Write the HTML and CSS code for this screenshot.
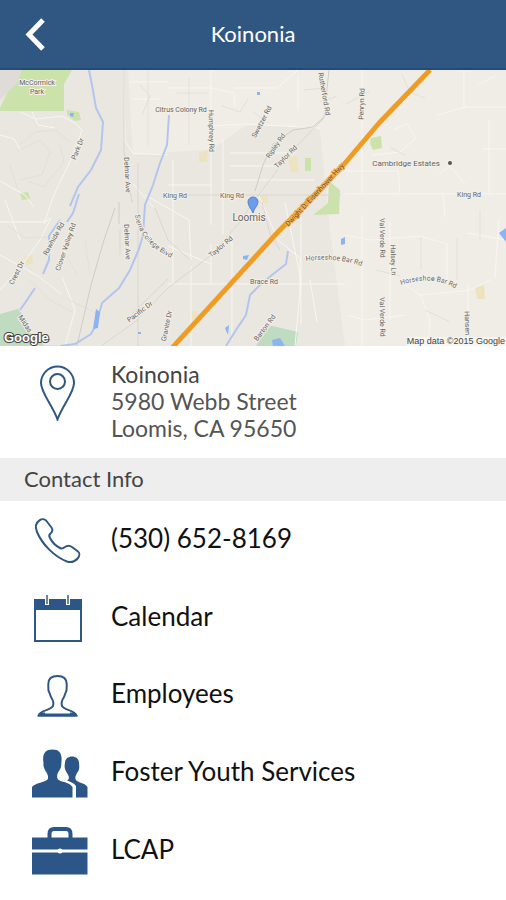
FILE: index.html
```html
<!DOCTYPE html>
<html lang="en">
<head>
<meta charset="utf-8">
<meta name="viewport" content="width=device-width, initial-scale=1">
<title>Koinonia</title>
<link rel="stylesheet" href="styles.css">
</head>
<body>
<header class="topbar">
  <button class="back" type="button" aria-label="Back">
    <svg class="back-icon" viewBox="0 0 24 36" aria-hidden="true"><path d="M19 4 5 18.500 19 33"/></svg>
  </button>
  <h1 class="title">Koinonia</h1>
</header>
<main class="content">
  <svg class="map" viewBox="0 70 506 276" role="img" aria-label="Map of Loomis">
    <rect class="land" y="70" width="506" height="276"/>
    <path class="land-light" d="M128 70H506V346H345L330 230 320 130 245 126 211 150 168 153 133 155Z"/>
    <path class="town" d="M168 152 211 150 250 125 318 127 320 180 270 242 211 240 168 220Z"/>
    <path class="park" d="M18 70H72L64 84V111H0V108Z"/>
    <path class="blank" d="M0 70H22L17 83 0 100Z"/>
    <path class="park" d="M67 110 79 112 81 120 75 121 67 115ZM20 193 28 192 30 199 22 200ZM305 158H311V171H305ZM371 138 381 136 382 148 373 150 370 144ZM329 181 340 190 339 214 313 215 328 203Z"/>
    <path class="wood" d="M0 314 18 309 27 320 31 335 45 346H0ZM268 325 298 332 296 346H256Z"/>
    <path class="yellow" d="M24 257 32 255 33 264 26 265ZM199 153 208 150 207 162 199 162ZM288 157 297 156 299 171 291 172ZM260 196H268V203H260ZM475 287 484 285 485 299 477 299ZM191 311H198V319H191Z"/>
    <g class="minor">
      <path d="M0 222 45 222 51 218 40 240 22 265 0 290M20 112 36 119 62 116 75 123 82 130 73 155 53 197 44 224M0 181 25 195 34 207M32 112 38 125 55 128M5 200 20 240M0 255 38 276 61 294M62 277 75 310 65 346M0 135 14 139 21 151"/>
      <path d="M124 70 125 141 133 153 168 155M130 82H168M133 99H160M168 88H211L234 93 235 107M234 88H277L298 70M211 70V225M298 75V110M212 126 245 124 320 128M168 185H211M173 160V285M223 140V235M230 153H295M230 166H280M230 180H315"/>
      <path d="M168 284H345M191 266V346M211 244V284M232 235V340M259 196 278 240 300 258 300 290M285 203 301 280 295 346M301 212V325M310 280 317 322M145 195 189 220 191 260M168 246 211 264M133 184 153 207"/>
      <path d="M345 194H506M345 171H398L400 194M362 70V194M372 155 400 152 416 138 407 124 393 130M438 115 465 107H506M464 70V108M478 85 495 76M482 149H506M489 120V194M439 174 450 166 465 184M345 235 370 240 420 236 447 244 447 280M362 215V346M390 222V320M347 315 365 320 406 315M420 294 430 320 428 346M445 217 443 194M467 233 506 240M499 218 495 278M468 285V346M402 283 420 295 470 290 490 280"/>
    </g>
    <g class="fine">
      <path d="M20 145 35 132 55 130 70 142M18 151 40 140 50 152 42 175 20 180M60 145 64 162 44 187 27 181M10 165 18 190M8 226 25 238 50 237M64 252 77 274M85 240 90 275M30 280 50 300 72 312M65 298 98 314"/>
      <path d="M140 85 150 96 142 115M148 70V145M176 93H208M181 108H207M189 78V145M222 106 240 112 248 99M253 112 269 123M304 90 325 88M320 102 337 96M346 104 370 91M391 148 405 155M402 75 410 92 425 98M480 210V240M421 238V270M457 238V280M376 270 400 276M425 310 450 322"/>
    </g>
    <path class="rail" d="M115 208 104 240 91 285 77 346M119 202 119 224M255 191 263 165 273 144 293 130 313 127 324 117 329 70"/>
    <path class="road" d="M124 70V152L132 203M138 163V346M120 230V255M0 346 65 346M101 346 135 322 168 288 210 256 240 222 253 202 292 151 324 118M132 314 168 279M155 208 168 240 190 260M262 202 270 234 280 250M168 195H341"/>
    <g class="water-line">
      <path d="M89 70 92 85 96 108 103 122 101 150 91 170 78 187 70 206M79 194 73 213 67 222M60 220 49 236 49 260 43 274M35 288 25 303 20 310"/>
      <path d="M169 115 167 145 160 163 153 185 145 205 143 235 139 249 130 270 119 288 102 303 96 325 91 334 75 344 60 346M288 251 286 264 272 275 259 286 250 295 246 315 236 330 226 346"/>
    </g>
    <path class="water" d="M96 309 100 312 98 328 93 329ZM243 256 249 255 247 260 243 259ZM225 328 229 325 228 335ZM341 239 345 237 345 244 341 245ZM499 233 506 228V242ZM272 340 280 338 285 346H273ZM257 92H260V95H257ZM70 113 74 113 73 117 70 116ZM138 332H141V334H138Z"/>
    <path class="highway-edge" d="M430 70 380 122 340 169 277 233 172 348"/>
    <path class="highway" d="M430 70 380 122 340 169 277 233 172 348"/>
    <path class="pin" d="M253 213C251 208 248 206 248 202A5 5 0 0 1 258 202C258 206 254 208 253 213Z"/>
    <g class="labels">
      <text x="37" y="85">McCormick</text><text x="37" y="94">Park</text>
      <text x="181" y="112">Citrus Colony Rd</text>
      <text transform="translate(211 131) rotate(89)" y="2">Humphrey Rd</text>
      <text transform="translate(262 122) rotate(-62)" y="2">Swetzer Rd</text>
      <text transform="translate(276 146) rotate(-55)" y="2">Ripley Rd</text>
      <text transform="translate(286 157) rotate(-45)" y="2">Taylor Rd</text>
      <text transform="translate(324 94) rotate(80)" y="2">Rutherford Rd</text>
      <text transform="translate(362 104) rotate(-88)" y="2">Penryn Rd</text>
      <text transform="translate(78 149) rotate(-68)" y="2">Park Dr</text>
      <text transform="translate(127 175) rotate(87)" y="2">Delmar Ave</text>
      <text transform="translate(127 242) rotate(87)" y="2">Delmar Ave</text>
      <text x="175" y="198">King Rd</text><text x="232" y="198">King Rd</text><text x="469" y="197">King Rd</text>
      <text transform="translate(54 239) rotate(-61)" y="2">Rawhide Rd</text>
      <text transform="translate(66 247) rotate(-71)" y="2">Clover Valley Rd</text>
      <text transform="translate(17 273) rotate(-63)" y="2">Crest Dr</text>
      <path id="college" class="guide" d="M135 215C138 236 152 250 181 263"/>
      <text class="along"><textPath href="#college">Sierra College Blvd</textPath></text>
      <text transform="translate(221 247) rotate(-40)" y="2">Taylor Rd</text>
      <text transform="translate(140 312) rotate(-37)" y="2">Pacific Dr</text>
      <text transform="translate(167 326) rotate(-78)" y="2">Granite Dr</text>
      <text transform="translate(25 324) rotate(57)" y="2">Midas</text>
      <text x="264" y="284">Brace Rd</text>
      <text transform="translate(265 328) rotate(-53)" y="2">Barton Rd</text>
      <path id="bar-west" class="guide" d="M306 261C330 258 350 260 374 271"/>
      <text class="along"><textPath href="#bar-west">Horseshoe Bar Rd</textPath></text>
      <path id="bar-east" class="guide" d="M401 285C424 278 442 278 464 294"/>
      <text class="along"><textPath href="#bar-east">Horseshoe Bar Rd</textPath></text>
      <text transform="translate(382 238) rotate(89)" y="2">Val Verde Rd</text>
      <text transform="translate(382 317) rotate(89)" y="2">Val Verde Rd</text>
      <text transform="translate(393 260) rotate(88)" y="2">Halsey Ln</text>
      <text transform="translate(467 323) rotate(88)" y="2">Hansen</text>
      <text class="highway-label" transform="translate(315 195) rotate(-47)" y="2">Dwight D. Eisenhower Hwy</text>
      <text class="place" x="249" y="221">Loomis</text>
      <text class="estate" x="406" y="166">Cambridge Estates</text>
      <circle class="dot" cx="450" cy="163" r="2"/>
    </g>
    <rect class="credit-bg" x="407" y="337" width="99" height="9"/>
    <text class="credit" x="505" y="344">Map data ©2015 Google</text>
    <text class="google" x="4" y="342">Google</text>
  </svg>
  <section class="address-row">
    <svg class="icon" viewBox="0 0 60 60" aria-hidden="true">
      <path class="line" d="M29.500 58.500C25 45 13 32 13 22A16.500 16.500 0 0 1 46 22C46 32 34 45 29.500 58.500Z"/>
      <circle class="line" cx="29.500" cy="20.500" r="7.500"/>
    </svg>
    <address class="address"><strong class="name">Koinonia</strong><br>5980 Webb Street<br>Loomis, CA 95650</address>
  </section>
  <h2 class="section-title">Contact Info</h2>
  <nav class="links" aria-label="Contact Info">
    <a class="row" href="tel:5306528169">
      <svg class="icon" viewBox="0 0 60 60" aria-hidden="true"><path class="line" d="M11.500 10.300C14 8.600 17 9 18.500 11L23.500 17.500C25 19.500 24.500 22 22.500 23.500C20.800 25 21 26.500 22 28C24 32 28 36 32 38C33.500 38.800 35 38.500 37 37C39 35.500 42 35.500 44 37L50 41.500C52 43 51.500 46 50 48C47 51.500 43.500 53 39 51.500C26 46.500 14 34 9 22C7 17 7.500 13 11.500 10.300Z"/></svg>
      <span class="label">(530) 652-8169</span>
    </a>
    <a class="row" href="#calendar">
      <svg class="icon" viewBox="0 0 60 60" aria-hidden="true"><path class="solid" d="M6 12H54V23H6Z"/><path class="line" d="M7 22V54H53V22"/><path class="ring-gap" d="M19 12V18M40 12V18"/><path class="ring" d="M19 8V17M40 8V17"/></svg>
      <span class="label">Calendar</span>
    </a>
    <a class="row" href="#employees">
      <svg class="icon" viewBox="0 0 60 60" aria-hidden="true"><path class="line" d="M10.500 50.500C12 45 22 46 25 41C26 38 25 35 23 32L21.500 28C19.500 25 20.500 22 20.300 19C20.300 13 24 11 29.500 11S38.700 13 38.700 19C38.500 22 39.500 25 37.500 28L36 32C34 35 33 38 34 41C37 46 47 45 48.500 50.500Z"/><path class="solid" d="M10 50 14 47.500H45L49 50V51.500H10Z"/><path class="cutout" d="M17 47 26 43H33L42 47V48.500H17Z"/></svg>
      <span class="label">Employees</span>
    </a>
    <a class="row" href="#foster-youth-services">
      <svg class="icon" viewBox="0 0 60 60" aria-hidden="true"><path class="solid" d="M4 54.500V44C8 39.500 15 40 19.500 36.500C21 34 19.500 31 17.500 28C16.500 25.500 15 24 15.500 20C14 11 17 6.500 24.500 6.500S34.500 11 33.300 20C33.500 24 32.500 26 31 28C29 31 28.500 34 30 36.500C34 40 40 38 44.500 44V54.500Z"/><path class="solid" d="M48 54.500V43C46 40 42.500 39 39 37.500C42 36 41 33 39 30C36 25 36.500 23 37 20C37 16 40 13.500 44 13.500S51 16 51 20C51.500 24 51.500 27 49 30C47 34 46.500 36 49 38C53 40.500 57 40 59.500 44V54.500Z"/></svg>
      <span class="label">Foster Youth Services</span>
    </a>
    <a class="row" href="#lcap">
      <svg class="icon" viewBox="0 0 60 60" aria-hidden="true"><path class="solid" d="M4 17.500H59.500V29.500H4ZM4 32.500H59.500V54.500H4Z"/><path class="handle" d="M21.500 18V14Q21.500 9 26 9H38Q42.500 9 42.500 14V18"/><circle class="cutout" cx="32" cy="31" r="2.500"/></svg>
      <span class="label">LCAP</span>
    </a>
  </nav>
</main>
</body>
</html>
```

FILE: styles.css
```css
* { box-sizing: border-box; }

body {
  margin: 0;
  min-height: 100vh;
  display: flex;
  flex-direction: column;
  background: #fff;
  color: #111;
  font-family: Lato, "Liberation Sans", sans-serif;
}

.topbar {
  display: grid;
  grid-template-columns: 60px 1fr 60px;
  align-items: center;
  height: 70px;
  background: #305782;
  border-bottom: 2px solid #244a75;
}

.back {
  display: flex;
  padding: 0 0 0 24px;
  border: 0;
  background: none;
}

.back-icon {
  width: 24px;
  height: 36px;
  fill: none;
  stroke: #fff;
  stroke-width: 5;
}

.title {
  margin: 0;
  color: #fff;
  font-size: 22px;
  font-weight: 400;
  line-height: 28px;
  text-align: center;
}

.content {
  flex: 1;
  display: flex;
  flex-direction: column;
}

/* Map */
.map {
  display: block;
  width: 100%;
  height: auto;
  font-family: Roboto, "Liberation Sans", sans-serif;
}

.map path { fill: none; }
.map .land { fill: #eae7e0; }
.map .land-light { fill: #f0ede7; }
.map .town { fill: #eae7e0; }
.map .blank { fill: #dfdcd8; }
.map .park { fill: #cbe2ab; }
.map .wood { fill: #bfdbc0; }
.map .yellow { fill: #eee3c0; }
.map .water { fill: #8ab4f2; }
.minor { stroke: #f8f6f2; stroke-width: 1; }
.fine { stroke: #e3e0da; stroke-width: 1; }
.rail { stroke: #cfccc8; stroke-width: 1; }
.road { stroke: #dad7d2; stroke-width: 1; }
.water-line { stroke: #b4c5ed; stroke-width: 2; }
.highway-edge { stroke: #e3a850; stroke-width: 5; }
.highway { stroke: #f09c20; stroke-width: 4; }
.map .pin { fill: #6d9cea; stroke: #5583ce; stroke-width: 1; }

.labels {
  fill: #666461;
  stroke: #f3f0ea;
  stroke-width: 2;
  paint-order: stroke;
  font-size: 7px;
  text-anchor: middle;
}

.labels .along { text-anchor: start; }
.labels .guide { stroke: none; }
.labels .place { font-size: 10px; }
.labels .estate { font-size: 8px; }
.labels .highway-label { fill: #6b4a20; stroke: #f3b65b; stroke-width: 2; }
.labels .dot { fill: #555; }
.credit-bg { fill: #f6f5f2; }

.credit {
  fill: #454545;
  font-family: "Liberation Sans", sans-serif;
  font-size: 9px;
  text-anchor: end;
}

.google {
  fill: #fff;
  stroke: #444;
  stroke-width: 2;
  paint-order: stroke;
  font-family: "Liberation Sans", sans-serif;
  font-size: 13px;
  font-weight: 700;
}

/* Rows */
.address-row,
.row {
  display: grid;
  grid-template-columns: 60px 1fr;
  column-gap: 23px;
  padding: 0 28px;
}

.address-row {
  align-items: start;
  padding-top: 15px;
  padding-bottom: 16px;
}

.address {
  color: #555;
  font-size: 23px;
  font-style: normal;
  line-height: 27px;
}

.name { color: #444; font-weight: 400; }

.section-title {
  margin: 0;
  padding: 7px 24px 8px;
  background: #eee;
  color: #444;
  font-size: 22px;
  font-weight: 400;
  line-height: 28px;
}

.links {
  flex: 1;
  display: flex;
  flex-direction: column;
  padding-bottom: 11px;
}

.row {
  flex: 1;
  align-items: center;
  color: #111;
  font-size: 26px;
  line-height: 32px;
  text-decoration: none;
}

.label { padding-bottom: 3px; }

.icon { display: block; width: 60px; height: 60px; }
.icon .line { fill: none; stroke: #305782; stroke-width: 2; }
.icon .solid { fill: #2d5688; }
.icon .cutout { fill: #fff; }
.icon .ring { stroke: #6b8796; stroke-width: 2; }
.icon .ring-gap { stroke: #fff; stroke-width: 4; }
.icon .handle { fill: none; stroke: #2d5688; stroke-width: 4; }
```
